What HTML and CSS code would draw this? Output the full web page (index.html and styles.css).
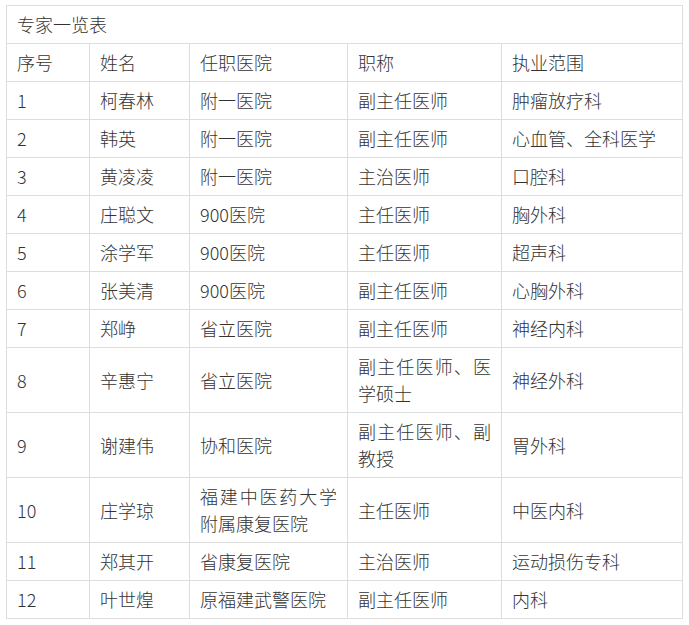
FILE: index.html
```html
<!DOCTYPE html>
<html lang="zh-CN">
<head>
<meta charset="utf-8">
<title>专家一览表</title>
<link rel="stylesheet" href="styles.css">
</head>
<body>
<table class="experts">
  <colgroup>
    <col class="c1"><col class="c2"><col class="c3"><col class="c4"><col class="c5">
  </colgroup>
  <tbody>
    <tr><td colspan="5">专家一览表</td></tr>
    <tr><td>序号</td><td>姓名</td><td>任职医院</td><td>职称</td><td>执业范围</td></tr>
    <tr><td>1</td><td>柯春林</td><td>附一医院</td><td>副主任医师</td><td>肿瘤放疗科</td></tr>
    <tr><td>2</td><td>韩英</td><td>附一医院</td><td>副主任医师</td><td>心血管、全科医学</td></tr>
    <tr><td>3</td><td>黄凌凌</td><td>附一医院</td><td>主治医师</td><td>口腔科</td></tr>
    <tr><td>4</td><td>庄聪文</td><td>900医院</td><td>主任医师</td><td>胸外科</td></tr>
    <tr><td>5</td><td>涂学军</td><td>900医院</td><td>主任医师</td><td>超声科</td></tr>
    <tr><td>6</td><td>张美清</td><td>900医院</td><td>副主任医师</td><td>心胸外科</td></tr>
    <tr><td>7</td><td>郑峥</td><td>省立医院</td><td>副主任医师</td><td>神经内科</td></tr>
    <tr><td>8</td><td>辛惠宁</td><td>省立医院</td><td>副主任医师、医学硕士</td><td>神经外科</td></tr>
    <tr><td>9</td><td>谢建伟</td><td>协和医院</td><td>副主任医师、副教授</td><td>胃外科</td></tr>
    <tr><td>10</td><td>庄学琼</td><td>福建中医药大学附属康复医院</td><td>主任医师</td><td>中医内科</td></tr>
    <tr><td>11</td><td>郑其开</td><td>省康复医院</td><td>主治医师</td><td>运动损伤专科</td></tr>
    <tr><td>12</td><td>叶世煌</td><td>原福建武警医院</td><td>副主任医师</td><td>内科</td></tr>
  </tbody>
</table>
</body>
</html>
```
FILE: styles.css
```css
html, body {
  margin: 0;
  padding: 0;
  background: #fff;
}
body {
  padding: 5px 0 0 6px;
  font-family: "Noto Sans CJK SC", "Noto Sans", sans-serif;
  font-weight: 300;
  color: #333;
}
.experts {
  border-collapse: collapse;
  table-layout: fixed;
  width: 676px;
  font-size: 18px;
  line-height: 27px;
}
.c1 { width: 83px; }
.c2 { width: 100px; }
.c3 { width: 158px; }
.c4 { width: 154px; }
.c5 { width: 181px; }
.experts td {
  border: 1px solid #dddddd;
  padding: 5px 10px;
  vertical-align: middle;
  text-align: justify;
  word-break: break-all;
}
```
